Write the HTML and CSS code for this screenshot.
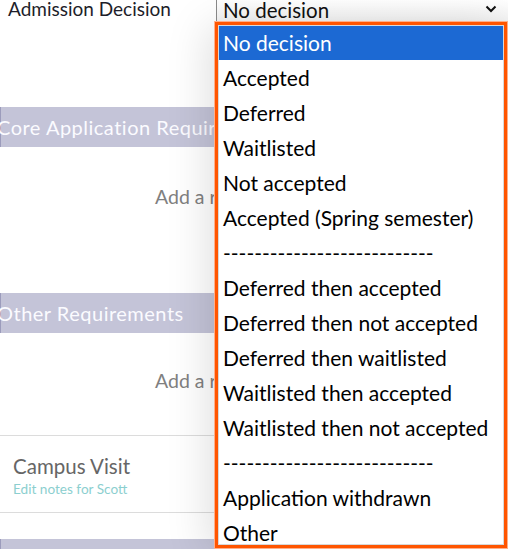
FILE: index.html
```html
<!DOCTYPE html>
<html lang="en">
<head>
<meta charset="utf-8">
<title>Admission Decision</title>
<link rel="stylesheet" href="styles.css">
</head>
<body>
<div class="page">
  <div class="decision-row">
    <label class="decision-label">Admission Decision</label>
    <div class="select">
      <span class="select-value">No decision</span>
      <svg class="chevron" width="12" height="8" viewBox="0 0 12 8"><path d="M1.5 1.5 L6 6 L10.5 1.5" fill="none" stroke="#111" stroke-width="2"/></svg>
    </div>
  </div>

  <section class="req-section">
    <div class="req-header"><span class="req-title">Core Application Requirements</span></div>
    <div class="req-body core"><span class="add-link">Add a requirement</span></div>
  </section>

  <section class="req-section">
    <div class="req-header"><span class="req-title">Other Requirements</span></div>
    <div class="req-body other"><span class="add-link">Add a requirement</span></div>
  </section>

  <div class="visit-row">
    <div class="visit-title">Campus Visit</div>
    <div class="visit-notes">Edit notes for Scott</div>
  </div>

  <div class="req-header short"></div>

  <ul class="listbox">
    <li class="opt selected">No decision</li>
    <li class="opt">Accepted</li>
    <li class="opt">Deferred</li>
    <li class="opt">Waitlisted</li>
    <li class="opt">Not accepted</li>
    <li class="opt">Accepted (Spring semester)</li>
    <li class="opt">---------------------------</li>
    <li class="opt">Deferred then accepted</li>
    <li class="opt">Deferred then not accepted</li>
    <li class="opt">Deferred then waitlisted</li>
    <li class="opt">Waitlisted then accepted</li>
    <li class="opt">Waitlisted then not accepted</li>
    <li class="opt">---------------------------</li>
    <li class="opt">Application withdrawn</li>
    <li class="opt">Other</li>
  </ul>
</div>
</body>
</html>
```
FILE: styles.css
```css
* { box-sizing: border-box; }
html, body {
  margin: 0;
  padding: 0;
  background: #fff;
  overflow: hidden;
}
body {
  font-family: Lato, "Open Sans", "DejaVu Sans", sans-serif;
  color: #222;
}
.page {
  position: relative;
  width: 508px;
  height: 549px;
  overflow: hidden;
}
.decision-row {
  display: flex;
  align-items: stretch;
  height: 22px;
}
.decision-label {
  width: 216px;
  padding-left: 8px;
  font-size: 19px;
  line-height: 22px;
  color: #1e1e2a;
  margin-top: -2px;
}
.select {
  flex: 1;
  display: flex;
  align-items: center;
  justify-content: space-between;
  border-left: 1px solid #8a8a8a;
  padding: 0 11px 0 6px;
  background: linear-gradient(#fff, #f2f2f2);
  height: 22px;
}
.select-value {
  font-size: 20.5px;
  line-height: 22px;
  color: #111;
  margin-top: -2px;
}
.chevron { margin-top: -4px; }

.req-section { display: flex; flex-direction: column; }
.req-section:first-of-type { margin-top: 85px; }
.req-header {
  height: 40px;
  background: #c4c4d8;
  border-left: 1px solid #9c9cbc;
  display: flex;
  align-items: center;
}
.req-header.short { height: 14px; margin-top: 26px; }
.req-title {
  font-size: 20px;
  color: #fbfbff;
  letter-spacing: 0.5px;
  margin-left: -4px;
  white-space: nowrap;
}
.req-body {
  display: flex;
  align-items: center;
  padding-left: 155px;
}
.req-body.core { height: 146px; padding-bottom: 48px; }
.req-body.other { height: 102px; padding-bottom: 8px; }
.add-link {
  font-size: 19.5px;
  color: #808080;
  white-space: nowrap;
}
.visit-row {
  border-top: 1px solid #dcdcdc;
  border-bottom: 1px solid #dcdcdc;
  height: 78px;
  padding: 18px 0 0 13px;
  display: flex;
  flex-direction: column;
}
.visit-title {
  font-size: 20.5px;
  line-height: 25px;
  color: #666;
}
.visit-notes {
  font-size: 13.6px;
  line-height: 20px;
  color: #8ccfcf;
}

.listbox {
  position: absolute;
  left: 214px;
  top: 21px;
  width: 294px;
  height: 528px;
  margin: 0;
  padding: 0;
  list-style: none;
  background: #fff;
  border: 4px solid #ff5500;
  outline: 1px solid #ffb08a;
  outline-offset: -1px;
  box-shadow: -6px 4px 40px rgba(0, 0, 0, 0.13);
  overflow: hidden;
}
.listbox::after {
  content: "";
  position: absolute;
  inset: 0;
  border: 1px solid #d8d8d8;
  pointer-events: none;
}
.opt {
  height: 35px;
  line-height: 35px;
  padding-left: 5px;
  font-size: 21px;
  color: #000;
  white-space: nowrap;
}
.opt.selected {
  background: #1c69d3;
  color: #fff;
}
```
